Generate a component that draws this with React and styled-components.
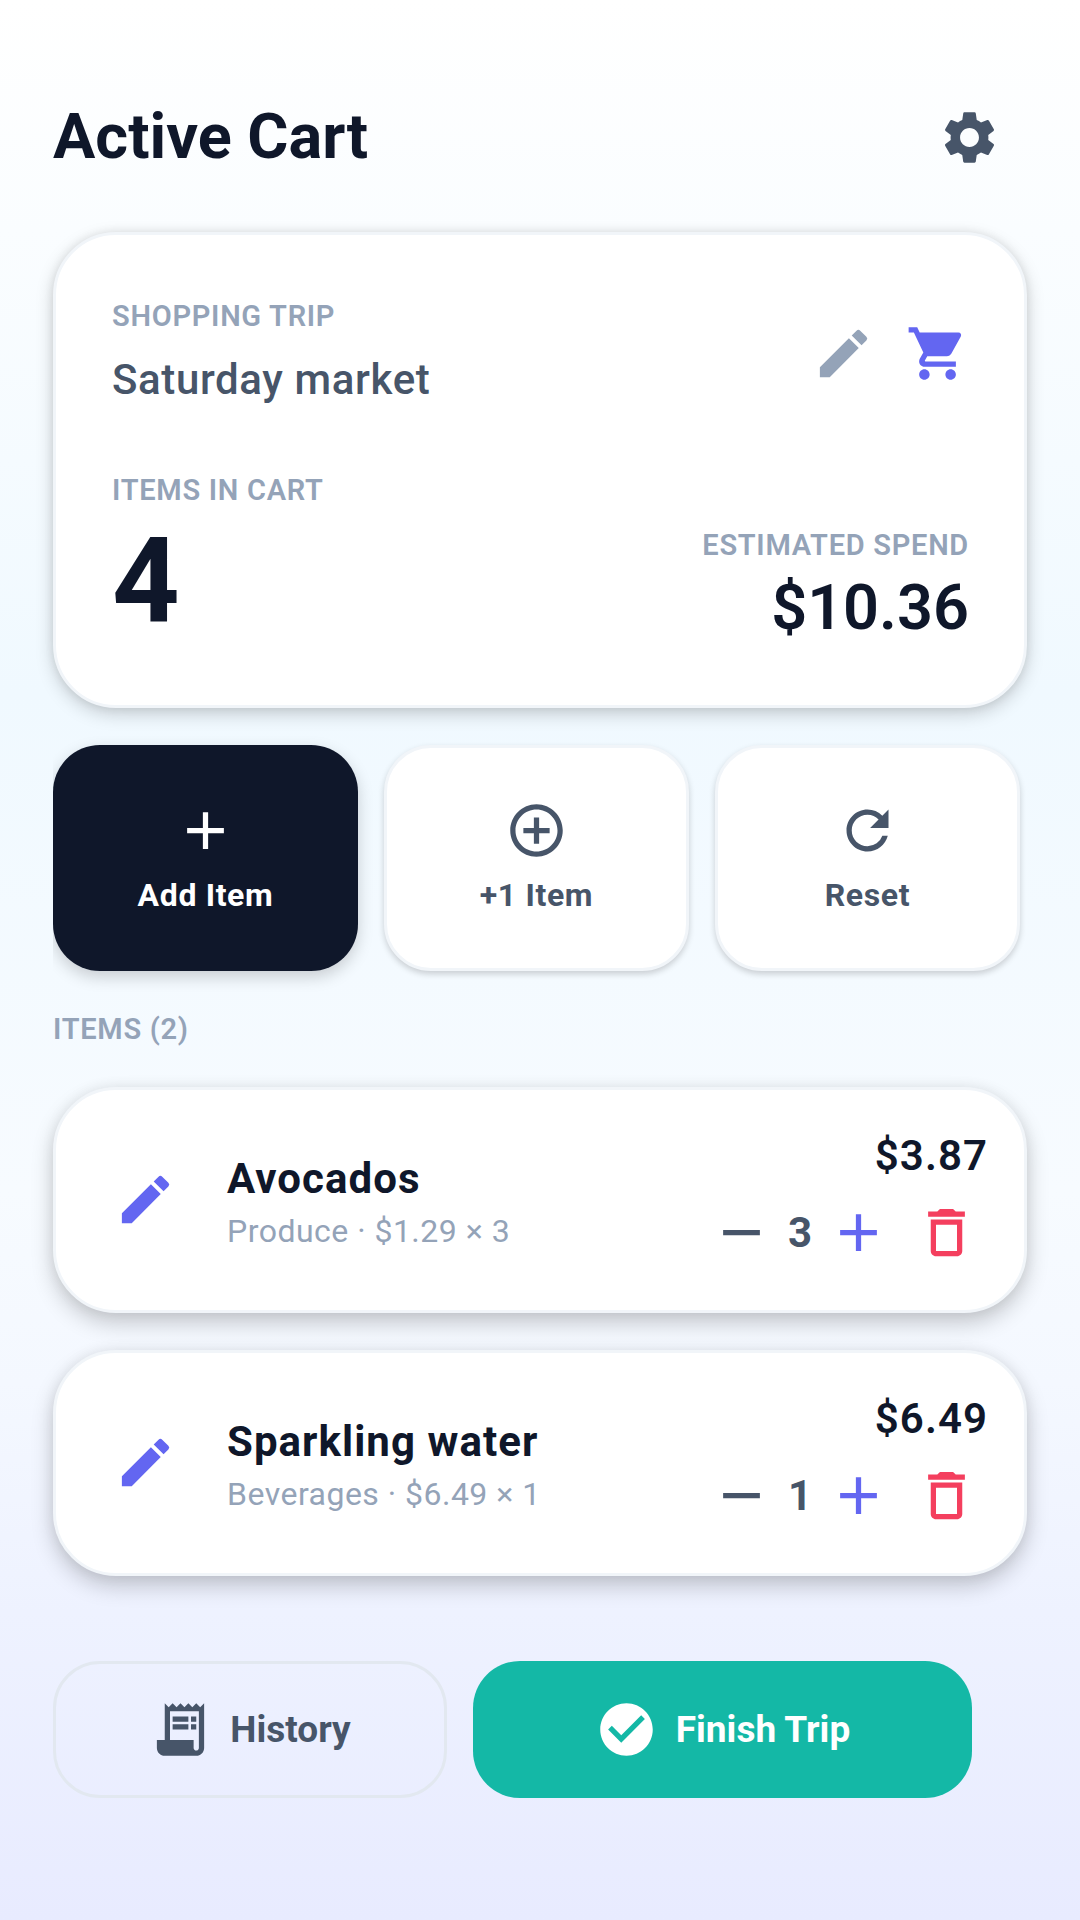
import React, { useState } from 'react';
import styled, { createGlobalStyle } from 'styled-components';
import {
  MdAdd,
  MdAddCircleOutline,
  MdCheckCircle,
  MdDeleteOutline,
  MdEdit,
  MdReceiptLong,
  MdRefresh,
  MdRemove,
  MdSettings,
  MdShoppingCart,
} from 'react-icons/md';

const GlobalStyle = createGlobalStyle`
  * {
    box-sizing: border-box;
  }

  body {
    margin: 0;
    font-family: Roboto, 'Liberation Sans', sans-serif;
    color: #0f172a;
  }

  button {
    margin: 0;
    padding: 0;
    border: 0;
    background: none;
    color: inherit;
    font: inherit;
    cursor: pointer;
  }

  h1, h2, p, ul {
    margin: 0;
    padding: 0;
    font-weight: inherit;
  }
`;

const Page = styled.main`
  min-height: 100vh;
  padding: 74px 53px 60px;
  background: linear-gradient(
    180deg,
    #ffffff 0%,
    #f0f9ff 36%,
    #f7fbff 62%,
    #f4f8ff 72%,
    #eef2ff 84%,
    #e8ebff 100%
  );
`;

const Header = styled.header`
  display: flex;
  align-items: center;
  justify-content: space-between;
  height: 126px;
  margin-bottom: 32px;
`;

const Title = styled.h1`
  font-size: 63px;
  line-height: 84px;
  font-weight: 700;
`;

const IconButton = styled.button`
  display: flex;
  align-items: center;
  justify-content: center;
  flex-shrink: 0;
  width: ${props => props.$size}px;
  height: ${props => props.$size}px;
  color: ${props => props.$color || '#475569'};

  & svg {
    width: 63px;
    height: 63px;
  }
`;

const Card = styled.section`
  border: 3px solid #f1f5f9;
  border-radius: 63px;
  background: #fff;
  box-shadow: 0 6px 18px rgba(0, 0, 0, 0.18), 0 0 10px rgba(0, 0, 0, 0.08);
`;

const Summary = styled(Card)`
  padding: 55px 55px 55px 56px;
`;

const TripRow = styled.div`
  display: flex;
  align-items: center;
  height: 126px;
  margin-bottom: 53px;
`;

const TripText = styled.div`
  flex-grow: 1;
`;

const Label = styled.p`
  color: #94a3b8;
  font-size: 29px;
  line-height: 42px;
  font-weight: 600;
  letter-spacing: 0.025em;
`;

const TripName = styled.p`
  margin-top: 11px;
  color: #475569;
  font-size: 42px;
  line-height: 63px;
  font-weight: 500;
  letter-spacing: 0.015em;
`;

const CartIcon = styled(MdShoppingCart)`
  width: 63px;
  height: 63px;
  color: #6366f1;
`;

const Totals = styled.div`
  display: flex;
  align-items: flex-end;
  justify-content: space-between;
`;

const Count = styled.p`
  margin-top: 2px;
  font-size: 118px;
  line-height: 137px;
  font-weight: 700;
`;

const Spend = styled.div`
  text-align: right;
`;

const SpendValue = styled.p`
  font-size: 63px;
  line-height: 84px;
  font-weight: 600;
`;

const Actions = styled.div`
  display: grid;
  grid-template-columns: repeat(3, 1fr);
  gap: 26px;
  margin: 37px 0;
  padding-right: 7px;
  overflow-x: clip;
`;

const ActionButton = styled.button`
  display: flex;
  flex-direction: column;
  align-items: center;
  justify-content: center;
  gap: 12px;
  height: 226px;
  padding-bottom: 2px;
  border-radius: 47px;
  color: #475569;
  font-size: 32px;
  line-height: 42px;
  font-weight: 700;
  letter-spacing: 0.02em;
  ${props =>
    props.$primary
      ? `
    background: #0f172a;
    color: #fff;
    box-shadow: 0 6px 16px rgba(0, 0, 0, 0.18);
  `
      : `
    border: 3px solid #f1f5f9;
    background: #fff;
    box-shadow: 0 3px 6px rgba(0, 0, 0, 0.18);
  `}

  & svg {
    width: 63px;
    height: 63px;
  }
`;

const ItemList = styled.ul`
  display: flex;
  flex-direction: column;
  gap: 37px;
  margin-top: 37px;
  list-style: none;
`;

const ItemCard = styled(Card)`
  display: flex;
  align-items: center;
  height: 226px;
  padding: 0 36px 2px 37px;
  box-shadow: 0 10px 22px rgba(0, 0, 0, 0.2), 0 0 14px rgba(0, 0, 0, 0.06);
`;

const ItemText = styled.div`
  flex-grow: 1;
  margin-left: 29px;
`;

const ItemName = styled.h2`
  font-size: 42px;
  line-height: 63px;
  font-weight: 700;
  letter-spacing: 0.025em;
`;

const ItemMeta = styled.p`
  color: #94a3b8;
  font-size: 32px;
  line-height: 42px;
  letter-spacing: 0.015em;
`;

const ItemSide = styled.div`
  display: flex;
  flex-direction: column;
  align-items: flex-end;
  gap: 3px;
`;

const Price = styled.p`
  font-size: 42px;
  line-height: 63px;
  font-weight: 600;
  letter-spacing: 0.025em;
`;

const Stepper = styled.div`
  display: flex;
  align-items: center;
  gap: 4px;
`;

const Quantity = styled.span`
  color: #475569;
  font-size: 42px;
  line-height: 63px;
  font-weight: 700;
`;

const Footer = styled.footer`
  display: grid;
  grid-template-columns: 15fr 19fr;
  gap: 26px;
  margin-top: 85px;
  padding-right: 55px;
`;

const FooterButton = styled.button`
  display: flex;
  align-items: center;
  justify-content: center;
  gap: 18px;
  height: 137px;
  border-radius: 47px;
  font-size: 37px;
  line-height: 53px;
  font-weight: 700;
  ${props =>
    props.$filled
      ? `
    background: #14b8a6;
    color: #fff;
  `
      : `
    border: 3px solid #e2e8f0;
    color: #475569;
  `}

  & svg {
    width: 63px;
    height: 63px;
  }
`;

const initialItems = [
  { id: 1, name: 'Avocados', category: 'Produce', cents: 129, quantity: 3 },
  { id: 2, name: 'Sparkling water', category: 'Beverages', cents: 649, quantity: 1 },
];

const money = cents => `$${(cents / 100).toFixed(2)}`;

const CartItem = ({ item, onStep, onRemove }) => (
  <ItemCard as="li">
    <IconButton $size={105} $color="#6366f1" aria-label={`Edit ${item.name}`}>
      <MdEdit />
    </IconButton>
    <ItemText>
      <ItemName>{item.name}</ItemName>
      <ItemMeta>
        {item.category} · {money(item.cents)} × {item.quantity}
      </ItemMeta>
    </ItemText>
    <ItemSide>
      <Price>{money(item.cents * item.quantity)}</Price>
      <Stepper>
        <IconButton $size={84} aria-label="Decrease" onClick={() => onStep(item.id, -1)}>
          <MdRemove />
        </IconButton>
        <Quantity>{item.quantity}</Quantity>
        <IconButton
          $size={84}
          $color="#6366f1"
          aria-label="Increase"
          onClick={() => onStep(item.id, 1)}
        >
          <MdAdd />
        </IconButton>
        <IconButton
          $size={84}
          $color="#f43f5e"
          aria-label={`Delete ${item.name}`}
          onClick={() => onRemove(item.id)}
        >
          <MdDeleteOutline />
        </IconButton>
      </Stepper>
    </ItemSide>
  </ItemCard>
);

const App = () => {
  const [items, setItems] = useState(initialItems);

  const step = (id, by) =>
    setItems(
      items.map(item =>
        item.id === id ? { ...item, quantity: Math.max(1, item.quantity + by) } : item
      )
    );
  const remove = id => setItems(items.filter(item => item.id !== id));

  const count = items.reduce((sum, item) => sum + item.quantity, 0);
  const total = items.reduce((sum, item) => sum + item.quantity * item.cents, 0);

  return (
    <>
      <GlobalStyle />
      <Page>
        <Header>
          <Title>Active Cart</Title>
          <IconButton $size={116} aria-label="Settings">
            <MdSettings />
          </IconButton>
        </Header>

        <Summary>
          <TripRow>
            <TripText>
              <Label>SHOPPING TRIP</Label>
              <TripName>Saturday market</TripName>
            </TripText>
            <IconButton $size={126} $color="#94a3b8" aria-label="Edit trip">
              <MdEdit />
            </IconButton>
            <CartIcon />
          </TripRow>
          <Totals>
            <div>
              <Label>ITEMS IN CART</Label>
              <Count>{count}</Count>
            </div>
            <Spend>
              <Label>ESTIMATED SPEND</Label>
              <SpendValue>{money(total)}</SpendValue>
            </Spend>
          </Totals>
        </Summary>

        <Actions>
          <ActionButton $primary>
            <MdAdd />
            Add Item
          </ActionButton>
          <ActionButton>
            <MdAddCircleOutline />
            +1 Item
          </ActionButton>
          <ActionButton onClick={() => setItems(initialItems)}>
            <MdRefresh />
            Reset
          </ActionButton>
        </Actions>

        <Label>ITEMS ({items.length})</Label>
        <ItemList>
          {items.map(item => (
            <CartItem key={item.id} item={item} onStep={step} onRemove={remove} />
          ))}
        </ItemList>

        <Footer>
          <FooterButton>
            <MdReceiptLong />
            History
          </FooterButton>
          <FooterButton $filled>
            <MdCheckCircle />
            Finish Trip
          </FooterButton>
        </Footer>
      </Page>
    </>
  );
};

export default App;
